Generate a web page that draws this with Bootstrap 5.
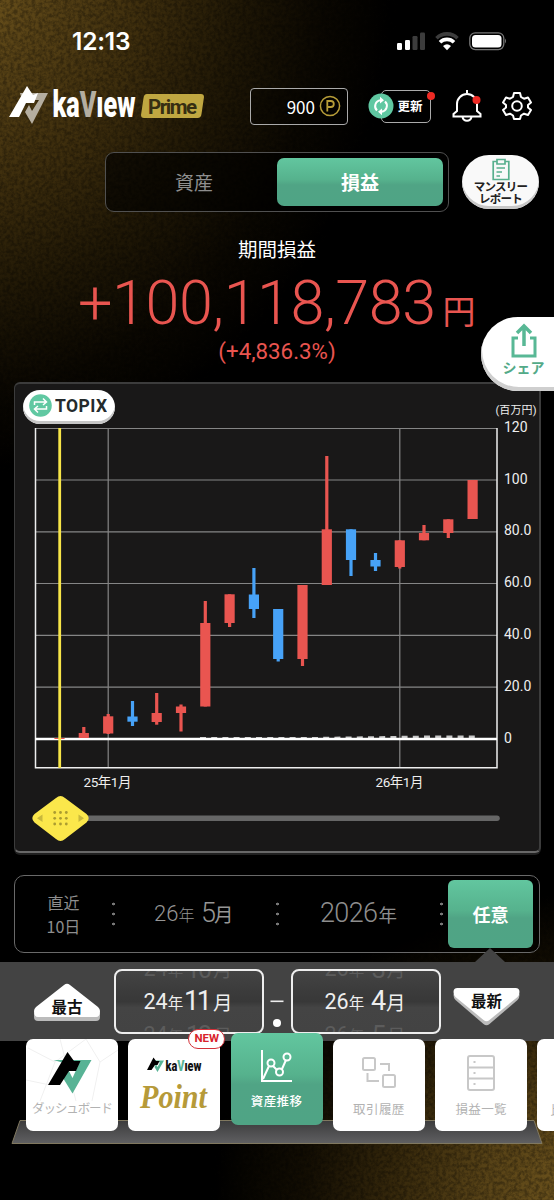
<!DOCTYPE html>
<html lang="ja">
<head>
<meta charset="utf-8">
<meta name="viewport" content="width=device-width, initial-scale=1">
<title>kaView Prime</title>
<link rel="stylesheet" href="https://cdn.jsdelivr.net/npm/bootstrap@5.3.0/dist/css/bootstrap.min.css">
<style>
:root{--mint:#53aa88;--gain:#e95550;--jp:"Roboto","Noto Sans CJK JP",sans-serif}
body{background:#000;font-family:var(--jp);color:#fff;line-height:1}
.noto{font-family:"Noto Sans CJK JP",sans-serif}
.screen{width:554px;height:1200px;background:
 radial-gradient(ellipse 460px 520px at -60px -40px,rgba(124,96,34,1) 0,rgba(95,72,24,.95) 22%,rgba(70,52,15,.88) 45%,rgba(50,37,9,.65) 65%,rgba(30,21,5,.35) 84%,transparent 100%),
 radial-gradient(ellipse 380px 300px at 590px 1190px,rgba(112,86,30,1) 0,rgba(92,70,24,.95) 28%,rgba(66,49,14,.8) 52%,rgba(36,26,6,.5) 76%,transparent 100%),#000}
.grain{inset:0;pointer-events:none;opacity:.3}
svg{display:block;flex:none}
svg text{font-family:var(--jp)}
.statusbar{height:82px;padding:0 47px 0 72px}
.clock{font:600 24.5px "Inter",sans-serif;letter-spacing:-.2px}
.apphead{height:48px;padding-left:9px}
.points{width:98px;height:37px;border:1.5px solid #aaa;border-radius:4px;margin-left:45px;padding-right:6px;background:#0004}
.points span{font-size:17px}
.refresh{width:50px;height:33px;border:1.5px solid #aaa;border-radius:5px;font-size:12.5px;font-weight:700;padding-right:7.5px;margin-left:33px}
.refresh svg{left:-14px;top:2px}
.reddot{width:8px;height:8px;border-radius:50%;background:#ee2a24}
.refresh .reddot{right:-5px;top:1px}
.toprow{margin:22px 0 0 105px}
.tabs{width:344px;height:60px;border:1.5px solid #505050;border-radius:9px;background:#000000a0;padding:5px}
.tabs .btn{border:0;border-radius:7px;font-size:19px;padding:0;color:#8e8e8e}
.mint{background:linear-gradient(#62c69f,#56b28d 45%,#50a485 56%,#4fa485)!important;color:#fff!important}
.monthly{width:77px;height:54px;border-radius:27px;background:#f9f9f9;box-shadow:inset 0 -3px 0 #c8c8c8;color:#222;font-size:11.5px;font-weight:700;line-height:11.5px;letter-spacing:-.8px;margin-left:13px;padding-top:3px}
.period-title{height:40px;margin-top:17px;font-size:19.5px}
.amount{height:65px;color:var(--gain)}
.percent{height:34px;color:var(--gain);font-size:22.3px}
.share{right:-1px;top:317px;width:74px;height:74px;border-radius:38px 0 0 38px;background:#fff;box-shadow:inset 1px -4px 0 #cfcfcf;color:var(--mint);font-size:14px;font-weight:700;padding:5px 0 0 11px;z-index:3}
.chart-card{width:527px;height:471px;margin:14px 0 0 14px;background:#191818;border:1px solid #3c3c3c;border-width:2px 2px 2px 1px;border-bottom-color:#686868;border-radius:6px;box-shadow:0 2px 0 #202020}
.topix{left:8px;top:6px;width:92px;height:34px;border-radius:18px;background:#fff;box-shadow:inset 0 -3px 0 #c6c6c6;color:#242a2c;font-size:17px;font-weight:700;padding:0 8px 3px 6px}
.spans{width:526px;height:78px;margin:22px 0 0 14px;border:1.5px solid #696969;border-radius:10px;background:#0008;color:#8e8e8e}
.recent{width:97px;font-size:16px;line-height:24px}
.vdots{width:3px;height:33px;background:radial-gradient(circle,#777 1.3px,transparent 1.6px) 0 1px/3px 10px}
.spans .btn{width:85px;height:68px;border:0;border-radius:6px;font-size:18px;font-weight:700;margin-left:5px}
.range{height:79px;margin-top:9px;background:#434343}
.pointer{left:475px;top:-14px;border:15px solid transparent;border-width:0 15px 14px;border-bottom-color:#434343}
.wheel{width:150px;height:65px;margin-top:7px;border:2px solid #eee;border-radius:8px;background:linear-gradient(#444,#3c3c3c 30%,#383838 50%,#444 60%,#434343)}
.bottom{height:111px;margin-top:-8px;padding-left:26px}
.shelf{left:0;bottom:0}
.tile{width:92px;height:92px;border-radius:7px;background:#fff;margin:6px 10.300px 0 0;flex:none;color:#b2b2b2;font-size:12.5px}
.tile.active{margin-top:0}
.tile svg.ico{margin:16px 0 12px}
.newtag{left:60px;top:-10px;width:37px;height:20px;border:1.5px solid #d33038;border-radius:10px;background:#fff;color:#d8232c;font-size:11.5px;font-weight:700}
.cap{letter-spacing:.4px}
.cap.tight{letter-spacing:-1.1px;margin-top:1px}
.tile.cut{padding:0 0 15px 13px}
</style>
</head>
<body>
<main class="screen position-relative overflow-hidden">
 <svg class="grain position-absolute" width="554" height="1200"><filter id="leather"><feTurbulence type="fractalNoise" baseFrequency=".28" numOctaves="3" seed="4"/><feColorMatrix values="0 0 0 0 0  0 0 0 0 0  0 0 0 0 0  2.600 0 0 0 -.9"/></filter><rect width="554" height="1200" filter="url(#leather)"/></svg>

 <div class="statusbar d-flex align-items-center justify-content-between position-relative">
  <span class="clock">12:13</span>
  <svg width="110" height="20" viewBox="397 31 110 20">
   <g fill="#fff"><rect x="397" y="43" width="5" height="7" rx="1.2"/><rect x="405" y="40" width="5" height="10" rx="1.2"/></g>
   <g fill="#3c3c3c"><rect x="412.5" y="36" width="5" height="14" rx="1.2"/><rect x="420" y="32.5" width="5" height="17.500" rx="1.2"/></g>
   <g fill="none" stroke-width="3.600"><path d="M436.500 38.200a15 15 0 0 1 21 0" stroke="#3c3c3c"/><path d="M440 42.200a10 10 0 0 1 14 0" stroke="#fff"/></g>
   <path d="M443 46q4-3.400 8 0l-4 4.200Z" fill="#fff"/>
   <rect x="469.800" y="32.800" width="34" height="16.800" rx="5.500" fill="none" stroke="#777" stroke-width="1.300"/><rect x="472" y="35" width="29.500" height="12.500" rx="3.500" fill="#fff"/><path d="M505 38.500q2 2.500 0 5Z" fill="#777"/>
  </svg>
 </div>

 <header class="apphead d-flex align-items-center position-relative">
  <svg width="196" height="44" viewBox="9 85 196 44">
   <g transform="translate(9 87)"><path d="M11 7H39L23 38 16 26 20 19 23 25 30 14H13Z" fill="#b5aea0"/><path d="M0 31 18 0 24 9 29 7 25 17H17L10 31Z" fill="#fff"/></g>
   <text x="52.500" y="118.300" font-size="37" font-weight="900" fill="#fff" textLength="83" lengthAdjust="spacingAndGlyphs">ka<tspan fill="#b5aea0">V</tspan>ıew</text>
   <path d="M147 95H201q3 0 3 3l-2.500 17q-.5 4-4 4H144q-3 0-3-3l2.500-17q.5-4 3.500-4Z" fill="#c0a741"/>
   <text x="148" y="114.500" font-size="20.500" font-weight="700" fill="#362e12" textLength="49">Prime</text>
  </svg>
  <div class="points d-flex align-items-center justify-content-end gap-1"><span class="noto">900</span>
   <svg width="22" height="22"><circle cx="11" cy="11" r="9.600" fill="none" stroke="#b79d38" stroke-width="1.500"/><path d="M8.300 16.500V6h3.500a3 3 0 0 1 0 6H8.300" fill="none" stroke="#b79d38" stroke-width="1.800"/></svg>
  </div>
  <div class="refresh d-flex align-items-center justify-content-end position-relative noto">更新
   <svg class="position-absolute" width="26" height="26"><circle cx="13" cy="13" r="12.500" fill="#60c8a2"/><g fill="none" stroke="#fff" stroke-width="2"><path d="M9 17.500A6 6 0 0 1 12.500 7.200M17 8.500A6 6 0 0 1 13.500 18.800"/></g><path d="M12 3.800 16 7.200 12 10.500ZM14 15.500V22.200L10 18.800Z" fill="#fff"/></svg>
   <i class="reddot position-absolute"></i>
  </div>
  <svg width="32" height="34" viewBox="451 89 32 34" style="margin-left:20px"><path d="M467 90v3M453.500 116.500H480.500V114L477 111V104a10 10 0 0 0-20 0v7l-3.500 3ZM462.500 117a4.600 4.600 0 0 0 9 0" fill="none" stroke="#fff" stroke-width="2"/><circle cx="476.500" cy="100" r="4" fill="#ee2a24"/></svg>
  <svg width="32" height="32" viewBox="-16 -16 32 32" style="margin-left:18px"><g fill="none" stroke="#fff" stroke-width="2" stroke-linejoin="round"><path d="M-3-13H3L4-9 7-7.300 11-8.500 14-3.500 11-1V1.500L14 4 11 9 7 7.700 4 9.500 3 13H-3L-4 9.500-7 7.700-11 9-14 4-11 1.500V-1L-14-3.500-11-8.500-7-7.300-4-9Z"/><circle r="4.800"/></g></svg>
 </header>

 <div class="toprow d-flex align-items-center position-relative">
  <div class="tabs d-flex noto"><button class="btn w-50">資産</button><button class="btn w-50 mint fw-bold">損益</button></div>
  <div class="monthly d-flex flex-column align-items-center noto">
   <svg width="18" height="23" viewBox="0 0 18 23" fill="none" stroke="#58b08e" stroke-width="1.700"><path d="M5 3.500H1.200V21.500H16.800V3.500H13M5 1.500H13V6H5ZM4.500 10H13M4.500 14H10M4.500 18H8"/></svg>
   <span class="text-center text-nowrap">マンスリー<br>レポート</span>
  </div>
 </div>

 <div class="period-title noto d-flex align-items-center justify-content-center position-relative">期間損益</div>
 <div class="amount position-relative"><svg width="554" height="65"><text x="78" y="55" font-size="61" font-weight="300" fill="#e95550" textLength="358">+100,118,783</text><text x="442.500" y="54.500" font-size="33" fill="#e95550">円</text></svg></div>
 <div class="percent d-flex align-items-center justify-content-center position-relative">(+4,836.3%)</div>

 <div class="share position-absolute d-flex flex-column align-items-center noto">
  <svg width="28" height="38" viewBox="0 0 28 38" fill="none" stroke="#58b895"><path d="M8 16H3V34H25V16H20" stroke-width="3"/><path d="M14 24V5M7 11 14 4 21 11" stroke-width="3.500"/></svg><span>シェア</span>
 </div>

 <section class="chart-card position-relative">
  <svg width="524" height="467" viewBox="15 384 524 467">
   <g stroke="#858585" stroke-width="1.200"><path d="M35 428.500H497M35 480H497M35 531.800H497M35 583.500H497M35 635.300H497M35 687.200H497M108.200 428V768M399.800 428V768"/></g>
   <path d="M35.500 428V767.700H497V428" fill="none" stroke="#eee" stroke-width="1.500"/>
   <path d="M200 738.300H310L430 736.800H475" fill="none" stroke="#c8c8c8" stroke-width="2.600" stroke-dasharray="6 5.200"/>
   <path d="M35 739H497" stroke="#fff" stroke-width="2.700"/>
   <g id="candles"></g>
   <path d="M59.700 428V768" stroke="#f7e548" stroke-width="2.800"/>
   <g fill="#eee" font-size="14"><text x="504" y="431.500">120</text><text x="504" y="483.500">100</text><text x="504" y="535.200">80.0</text><text x="504" y="587">60.0</text><text x="504" y="639">40.0</text><text x="504" y="691">20.0</text><text x="504" y="742.500">0</text>
   <text x="495.500" y="414" font-size="11" textLength="41">(百万円)</text><text x="83.500" y="787" font-size="13.500" textLength="48">25年1月</text><text x="375.500" y="787" font-size="13.500" textLength="48">26年1月</text></g>
   <path d="M60 818.300H497" stroke="#666" stroke-width="5.500" stroke-linecap="round"/>
   <path d="M56 798Q60.500 794 65 798L86.500 814Q91 818.300 86.500 822.500L65 839Q60.500 843 56 839L34.500 822.500Q30 818.300 34.500 814Z" fill="#fbe74b"/>
   <path d="M37 818.300 42.500 814.500V822ZM84 818.300 78.500 814.500V822Z" fill="#c8b83c"/>
   <g fill="#ab9c31"><circle cx="54.700" cy="812.500" r="1.400"/><circle cx="60.500" cy="812.500" r="1.400"/><circle cx="66.300" cy="812.500" r="1.400"/><circle cx="54.700" cy="818.300" r="1.400"/><circle cx="60.500" cy="818.300" r="1.400"/><circle cx="66.300" cy="818.300" r="1.400"/><circle cx="54.700" cy="824" r="1.400"/><circle cx="60.500" cy="824" r="1.400"/><circle cx="66.300" cy="824" r="1.400"/></g>
  </svg>
  <div class="topix position-absolute d-flex align-items-center justify-content-between">
   <svg width="23" height="23"><circle cx="11.500" cy="11.500" r="11.300" fill="#60c8a2"/><path d="M5.500 11V8H17M14 4.500 17.500 8 14 11M17.500 12V15H6M9 12 5.500 15 9 18.500" fill="none" stroke="#fff" stroke-width="1.500"/></svg><svg width="52" height="18"><text x="0" y="14.500" font-size="17.500" font-weight="700" fill="#242a2c" textLength="52">TOPIX</text></svg>
  </div>
 </section>

 <section class="spans position-relative d-flex align-items-center">
  <div class="recent noto text-center">直近<br>10日</div><i class="vdots"></i>
  <svg width="161" height="40"><g fill="#969696"><text x="39" y="27" font-size="22" font-weight="300">26<tspan font-size="16">年</tspan></text><text x="86" y="28" font-size="27" font-weight="300">5</text><text x="99" y="27.500" font-size="19.500">月</text></g></svg><i class="vdots"></i>
  <svg width="161" height="40"><g fill="#8e8e8e"><text x="41" y="27.500" font-size="27" font-weight="300" textLength="58">2026</text><text x="99.500" y="28" font-size="18.500">年</text></g></svg><i class="vdots"></i>
  <button class="btn mint noto">任意</button>
 </section>

 <section class="range position-relative d-flex align-items-start">
  <i class="pointer position-absolute"></i>
  <svg width="114" height="79" viewBox="0 962 114 79"><path d="M64 987q3-2.500 6 0L98 1010q2 2 2 4v3q0 4-4 4H38q-4 0-4-4v-3q0-2 2-4Z" fill="#bbb"/><path d="M64 985q3-2.500 6 0L98 1007q2 2 2 4 0 6-4 6H38q-4 0-4-6 0-2 2-4Z" fill="#fff"/><text x="51.500" y="1012.500" font-size="15.500" font-weight="700" fill="#111" textLength="31">最古</text></svg>
  <div class="wheel overflow-hidden"><svg width="146" height="61" viewBox="116 971 146 61"><g fill="#eee"><text x="143.500" y="1009" font-size="21.500">24<tspan font-size="15.500">年</tspan></text><text x="184" y="1010" font-size="27" textLength="28">11</text><text x="213" y="1009.500" font-size="19.500">月</text></g><g fill="#5c5c5c"><text x="143.500" y="976" font-size="21.500">24<tspan font-size="15.500">年</tspan></text><text x="186" y="978" font-size="25" textLength="26">10</text><text x="213" y="977" font-size="19">月</text><text x="143.500" y="1042" font-size="21.500">24<tspan font-size="15.500">年</tspan></text><text x="186" y="1044" font-size="25" textLength="26">12</text><text x="213" y="1043" font-size="19">月</text></g></svg></div>
  <svg width="26.500" height="79" viewBox="264 962 26.500 79"><path d="M270.500 1001.300H283.500" stroke="#eee" stroke-width="1.600"/><circle cx="277" cy="1023" r="4" fill="#fff"/></svg>
  <div class="wheel overflow-hidden"><svg width="146" height="61" viewBox="292.500 971 146 61"><g fill="#eee"><text x="324" y="1009" font-size="21.500">26<tspan font-size="15.500">年</tspan></text><text x="370.500" y="1010" font-size="27">4</text><text x="385.500" y="1009.500" font-size="19.500">月</text></g><g fill="#5c5c5c"><text x="324" y="976" font-size="21.500">26<tspan font-size="15.500">年</tspan></text><text x="371" y="978" font-size="26">3</text><text x="386" y="977" font-size="19">月</text><text x="324" y="1042" font-size="21.500">26<tspan font-size="15.500">年</tspan></text><text x="371" y="1044" font-size="26">5</text><text x="386" y="1043" font-size="19">月</text></g></svg></div>
  <svg width="113" height="79" viewBox="440.500 962 113 79"><path d="M457 992H515q4 0 4 3 0 3-2 5L489 1024q-3 2.500-6 0L455 1000q-2-2-2-5 0-3 4-3Z" fill="#bbb"/><path d="M457 988H515q4 0 4 4 0 3-2 5L489 1020q-3 2.500-6 0L455 997q-2-2-2-5 0-4 4-4Z" fill="#fff"/><text x="470.500" y="1006.500" font-size="15.500" font-weight="700" fill="#111" textLength="31">最新</text></svg>
 </section>

 <nav class="bottom position-relative d-flex align-items-start">
  <svg class="shelf position-absolute" width="554" height="26" viewBox="0 1118 554 26"><defs><linearGradient id="sh" x2="0" y2="1"><stop stop-color="#3b3b3c"/><stop offset="1" stop-color="#606062"/></linearGradient></defs><path d="M20 1120.500H534L542 1143.500H12Z" fill="url(#sh)" stroke="#80785f"/></svg>
  <div class="tile position-relative d-flex flex-column align-items-center noto">
   <svg width="92" height="62" viewBox="26 1039 92 62"><path d="M28 1048 55 1062 86 1039M55 1062 40 1101M86 1039 100 1062 118 1050M100 1062 92 1101M26 1080 50 1085M60 1039 76 1101" stroke="#f0f0f0" fill="none"/><path d="M53.500 1060H91.500L72.500 1093.500 63 1078 68 1069 72.500 1078 77.500 1067Z" fill="#58b395"/><path d="M48 1085 67.500 1052 74 1061H80.500L76 1071H69L60 1085Z" fill="#000"/></svg><span class="cap tight text-nowrap">ダッシュボード</span>
  </div>
  <div class="tile position-relative d-flex">
   <svg width="92" height="92" viewBox="129 1039 92 92"><path d="M152 1060.500H165L158.500 1072 155.500 1067 157 1064 158.500 1067 161 1062.500Z" fill="#58b395"/><path d="M148 1070 154.500 1057.500 157 1061H160.500L158.500 1065H156L152.500 1070Z" fill="#000"/><text x="166.500" y="1070.500" font-size="15.500" font-weight="900" fill="#111" textLength="36" lengthAdjust="spacingAndGlyphs">ka<tspan fill="#58b395">V</tspan>ıew</text><text x="141" y="1108" style="font-family:'Liberation Serif',serif" font-style="italic" font-weight="700" font-size="34" fill="#b69a39" textLength="67" lengthAdjust="spacingAndGlyphs">Point</text></svg>
   <span class="newtag position-absolute d-flex align-items-center justify-content-center">NEW</span>
  </div>
  <div class="tile active mint position-relative d-flex flex-column align-items-center noto">
   <svg class="ico" width="36" height="34" viewBox="0 0 36 34" fill="none" stroke="#fff" stroke-width="2"><path d="M3 1V32H33M4 30 10 17M14 17 18 21M23 20 27 11"/><circle cx="12" cy="14" r="3.500"/><circle cx="20.500" cy="23" r="3.500"/><circle cx="28" cy="8" r="3.500"/></svg><span class="cap fw-medium">資産推移</span>
  </div>
  <div class="tile position-relative d-flex flex-column align-items-center noto">
   <svg class="ico" width="36" height="36" viewBox="0 0 36 36" fill="none" stroke="#c8c8c8" stroke-width="2"><rect x="2" y="3" width="12" height="12" rx="1.500"/><rect x="22" y="20" width="12" height="12" rx="1.500"/><path d="M19 9H28V16M6.500 18V26H18"/></svg><span class="cap">取引履歴</span>
  </div>
  <div class="tile position-relative d-flex flex-column align-items-center noto">
   <svg class="ico" width="30" height="36" viewBox="0 0 30 36" fill="none" stroke="#c8c8c8" stroke-width="2"><path d="M4 1H26Q28 1 28 3V33Q28 35 26 35H4Q2 35 2 33V3Q2 1 4 1ZM2 12.500H28M2 23.500H28M7.500 7h2M7.500 18h2M7.500 29h2"/></svg><span class="cap">損益一覧</span>
  </div>
  <div class="tile cut position-relative d-flex align-items-end noto">比較</div>
 </nav>
</main>
<script>
// centre x, wick top, body top, body bottom, wick bottom, direction
const candles = [
 [59.5,738,738,739,739,1],[83.8,727,733,738,738,1],[108.2,714,716.3,733.5,734,1],[132.5,701,716.5,721.7,726,0],
 [156.7,693,713,722,724.7,1],[181,704.5,706.5,713,731.5,1],[205.3,601,623,706.5,706.5,1],[229.6,594.3,594.3,623,627,1],
 [253.9,568,594.5,609,618,0],[278.2,609,609,659,661.5,0],[302.5,585,585,659,666,1],[326.8,456,529.3,585,585,1],
 [351,529.3,529.3,560,576,0],[375.5,553,560,566.5,571,0],[399.8,540.3,540.3,567,568.5,1],[424,525,533,540.3,540.3,1],
 [448.3,519.3,519.3,533,538,1],[472.6,480,480,519,519,1]
];
document.getElementById('candles').innerHTML = candles.map(([x,wt,bt,bb,wb,up]) =>
 `<g fill="${up ? '#e95550' : '#47a2f7'}"><rect x="${x-1.6}" y="${wt}" width="3.200" height="${wb-wt}"/><rect x="${x-5.1}" y="${bt}" width="10.200" height="${bb-bt}"/></g>`).join('');
</script>
<script src="https://cdn.jsdelivr.net/npm/bootstrap@5.3.0/dist/js/bootstrap.bundle.min.js"></script>
</body>
</html>
